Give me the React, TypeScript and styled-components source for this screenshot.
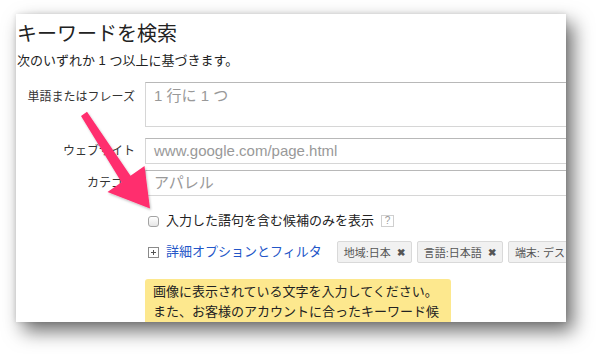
import React from "react";
import styled, { createGlobalStyle } from "styled-components";

const Global = createGlobalStyle`
  html, body { margin: 0; padding: 0; background: #fff; }
  body {
    font-family: "Liberation Sans", "Noto Sans CJK JP", sans-serif;
    color: #222;
    width: 596px;
    height: 354px;
    overflow: hidden;
  }
`;

const Stage = styled.div`
  position: relative;
  width: 596px;
  height: 354px;
  padding: 14px 0 0 16px;
  box-sizing: border-box;
`;

const Card = styled.div`
  width: 550px;
  height: 308px;
  background: #fff;
  overflow: hidden;
  box-sizing: border-box;
  padding-top: 8px;
  padding-left: 1px;
  box-shadow: 7px 9px 18px rgba(0, 0, 0, 0.58), 0 0 5px rgba(0, 0, 0, 0.12);
`;

const Title = styled.h1`
  margin: 0;
  font-size: 20px;
  line-height: 24px;
  font-weight: normal;
  color: #222;
`;

const Subtitle = styled.p`
  margin: 6px 0 0;
  font-size: 13px;
  line-height: 18px;
  color: #222;
`;

const Form = styled.div`
  display: grid;
  grid-template-columns: 118px 1fr;
  column-gap: 10px;
  margin-top: 12px;
`;

const Label = styled.div<{ $top: number; $pad: number }>`
  grid-column: 1;
  margin-top: ${(p) => p.$top}px;
  padding-top: ${(p) => p.$pad}px;
  text-align: right;
  font-size: 12px;
  line-height: 14px;
  color: #333;
  white-space: nowrap;
`;

const Field = styled.div<{ $top: number }>`
  grid-column: 2;
  margin-top: ${(p) => p.$top}px;
  display: flex;
  align-items: center;
  min-width: 0;
`;

const TextBox = styled.div<{ $h: number; $padTop: number }>`
  width: 460px;
  flex: none;
  height: ${(p) => p.$h}px;
  box-sizing: border-box;
  border: 1px solid #d6d6d6;
  border-top-color: #b8b8b8;
  padding: ${(p) => p.$padTop}px 8px 0;
  font-size: 15px;
  line-height: 18px;
  color: #999;
  white-space: nowrap;
`;

const Checkbox = styled.span`
  display: inline-block;
  width: 11px;
  height: 11px;
  box-sizing: border-box;
  border: 1px solid #a3a3a3;
  border-radius: 3px;
  background: linear-gradient(#ffffff, #e6e6e6);
  margin: 0 7px 0 3px;
  flex: none;
`;

const RowText = styled.span`
  font-size: 13px;
  line-height: 18px;
  color: #222;
  white-space: nowrap;
`;

const Help = styled.span`
  display: inline-flex;
  align-items: center;
  justify-content: center;
  width: 13px;
  height: 12px;
  box-sizing: border-box;
  border: 1px solid #cfcfcf;
  font-size: 10px;
  line-height: 10px;
  color: #999;
  margin-left: 7px;
  flex: none;
`;

const PlusIcon = styled.svg`
  flex: none;
  margin: 0 7px 0 3px;
`;

const Link = styled.a`
  font-size: 13px;
  line-height: 18px;
  color: #2356c8;
  text-decoration: none;
  white-space: nowrap;
  margin-right: 15px;
`;

const Chips = styled.div`
  display: flex;
  gap: 5px;
  flex: none;
`;

const Chip = styled.span`
  display: inline-flex;
  align-items: center;
  height: 22px;
  box-sizing: border-box;
  padding: 0 6px;
  border: 1px solid #d9d9d9;
  border-radius: 2px;
  background: #f1f1f1;
  font-size: 11px;
  color: #555;
  white-space: nowrap;
  flex: none;
`;

const ChipX = styled.span`
  margin-left: 6px;
  font-size: 10px;
  font-weight: bold;
  color: #555;
`;

const Notice = styled.div`
  width: 306px;
  box-sizing: border-box;
  padding: 3px 8px 6px;
  background: #fde88e;
  border-radius: 3px;
  font-size: 13px;
  line-height: 20px;
  color: #222;
`;

const ArrowLayer = styled.svg`
  position: absolute;
  left: 0;
  top: 0;
  pointer-events: none;
`;

export default function App() {
  return (
    <>
      <Global />
      <Stage>
        <Card>
          <Title>キーワードを検索</Title>
          <Subtitle>次のいずれか 1 つ以上に基づきます。</Subtitle>
          <Form>
            <Label $top={0} $pad={8}>単語またはフレーズ</Label>
            <Field $top={0}>
              <TextBox $h={45} $padTop={4}>1 行に 1 つ</TextBox>
            </Field>

            <Label $top={11} $pad={6}>ウェブサイト</Label>
            <Field $top={11}>
              <TextBox $h={26} $padTop={3}>www.google.com/page.html</TextBox>
            </Field>

            <Label $top={6} $pad={6}>カテゴリ</Label>
            <Field $top={6}>
              <TextBox $h={26} $padTop={3}>アパレル</TextBox>
            </Field>

            <Field $top={16}>
              <Checkbox />
              <RowText>入力した語句を含む候補のみを表示</RowText>
              <Help>?</Help>
            </Field>

            <Field $top={11}>
              <PlusIcon width="11" height="11" viewBox="0 0 11 11">
                <rect x="0.5" y="0.5" width="10" height="10" fill="#fff" stroke="#8a8a8a" />
                <path d="M3 5.5h5M5.5 3v5" stroke="#555" strokeWidth="1" />
              </PlusIcon>
              <Link href="#">詳細オプションとフィルタ</Link>
              <Chips>
                <Chip>地域:日本<ChipX>✖</ChipX></Chip>
                <Chip>言語:日本語<ChipX>✖</ChipX></Chip>
                <Chip>端末: デスクトップとノートパソコン<ChipX>✖</ChipX></Chip>
              </Chips>
            </Field>

            <Field $top={16}>
              <Notice>
                画像に表示されている文字を入力してください。
                <br />
                また、お客様のアカウントに合ったキーワード候補を表示するために使用されます。
              </Notice>
            </Field>
          </Form>
        </Card>
        <ArrowLayer width="596" height="354" viewBox="0 0 596 354">
          <defs>
            <filter id="arrowShadow" x="-20%" y="-20%" width="140%" height="140%">
              <feDropShadow dx="1" dy="1.5" stdDeviation="1.2" floodColor="#000" floodOpacity="0.25" />
            </filter>
          </defs>
          <polygon
            points="87,111.8 130.5,175.8 144.5,166 150,208.5 107.5,192 121.5,182.2 81,116"
            fill="#ff2d6e"
            filter="url(#arrowShadow)"
          />
        </ArrowLayer>
      </Stage>
    </>
  );
}
